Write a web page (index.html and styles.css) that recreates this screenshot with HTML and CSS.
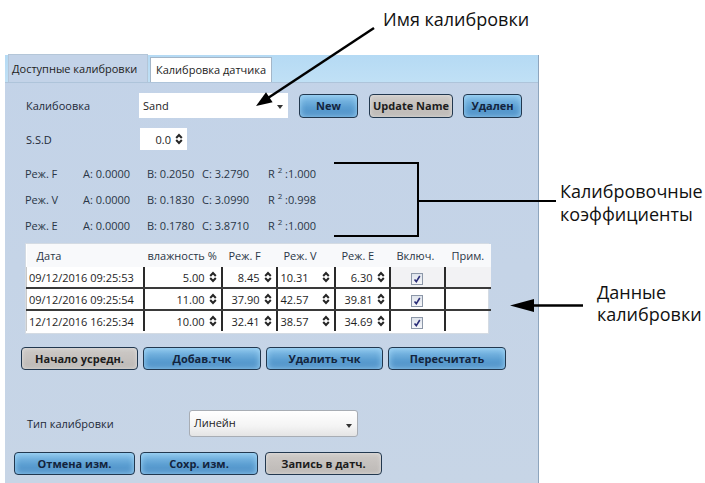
FILE: index.html
```html
<!DOCTYPE html>
<html lang="ru">
<head>
    <meta charset="UTF-8">
    <meta name="viewport" content="width=device-width, initial-scale=1.0">
    <title>Калибровки</title>
    <link rel="stylesheet" href="styles.css">
</head>
<body>
    <div class="page">
        <div class="window">
            <div class="tabstrip">
                <div class="tab active">Доступные калибровки</div>
                <div class="tab">Калибровка датчика</div>
            </div>

            <div class="row row-name">
                <span class="label">Калибоовка</span>
                <div class="combo combo-name"><span>Sand</span><span class="caret"></span></div>
                <button class="btn blue btn-new">New</button>
                <button class="btn gray btn-update">Update Name</button>
                <button class="btn blue btn-del">Удален</button>
            </div>

            <div class="row row-ssd">
                <span class="label">S.S.D</span>
                <div class="spin">
                    <span>0.0</span>
                    <svg class="arrows" width="8" height="12" viewBox="0 0 8 12"><path d="M1.2 5 L4 2 L6.8 5 M1.2 7 L4 10 L6.8 7"/></svg>
                </div>
            </div>

            <div class="coefs">
                <div class="coef"><span>Реж. F</span><span>A: 0.0000</span><span>B: 0.2050</span><span>C: 3.2790</span><span>R <sup>2</sup> :1.000</span></div>
                <div class="coef"><span>Реж. V</span><span>A: 0.0000</span><span>B: 0.1830</span><span>C: 3.0990</span><span>R <sup>2</sup> :0.998</span></div>
                <div class="coef"><span>Реж. E</span><span>A: 0.0000</span><span>B: 0.1780</span><span>C: 3.8710</span><span>R <sup>2</sup> :1.000</span></div>
            </div>

            <div class="grid-wrap">
                <table class="grid">
                    <colgroup>
                        <col style="width:117px"><col style="width:78px"><col style="width:55px">
                        <col style="width:58px"><col style="width:55px"><col style="width:55px"><col style="width:46px">
                    </colgroup>
                    <thead>
                        <tr>
                            <th class="first">Дата</th>
                            <th class="hum">влажность %</th>
                            <th>Реж. F</th>
                            <th>Реж. V</th>
                            <th>Реж. E</th>
                            <th>Включ.</th>
                            <th>Прим.</th>
                        </tr>
                    </thead>
                    <tbody id="rows">
                        <!-- rows are built by the script below -->
                    </tbody>
                </table>
            </div>

            <div class="row btn-row">
                <button class="btn gray w117">Начало усредн.</button>
                <button class="btn blue w118">Добав.тчк</button>
                <button class="btn blue w117">Удалить тчк</button>
                <button class="btn blue w118">Пересчитать</button>
            </div>

            <div class="row row-type">
                <span class="label">Тип калибровки</span>
                <div class="combo combo-type"><span>Линейн</span><span class="caret"></span></div>
            </div>

            <div class="row bottom-row">
                <button class="btn blue w121">Отмена изм.</button>
                <button class="btn blue w118">Сохр. изм.</button>
                <button class="btn gray w117 push">Запись в датч.</button>
            </div>
        </div>

        <svg class="callouts" width="705" height="483" viewBox="0 0 705 483">
            <line x1="374" y1="28" x2="268" y2="98"/>
            <polygon points="256,106 272.6,102.2 266,92.2"/>
            <polyline class="thin" points="334,163 418,163 418,236 334,236"/>
            <line class="thin" x1="418" y1="201" x2="556" y2="201"/>
            <line x1="583" y1="305.5" x2="530" y2="305.5"/>
            <polygon points="510,305.5 534,299 534,312"/>
        </svg>
        <div class="note note-name">Имя калибровки</div>
        <div class="note note-coef">Калибровочные<br>коэффициенты</div>
        <div class="note note-data">Данные<br>калибровки</div>
    </div>

    <script>
        document.addEventListener('DOMContentLoaded', function() {
            const points = [
                { date: '09/12/2016 09:25:53', hum: '5.00', f: '8.45', v: '10.31', e: '6.30', sel: true },
                { date: '09/12/2016 09:25:54', hum: '11.00', f: '37.90', v: '42.57', e: '39.81' },
                { date: '12/12/2016 16:25:34', hum: '10.00', f: '32.41', v: '38.57', e: '34.69' }
            ];

            const arrows = '<svg class="arrows" width="8" height="12" viewBox="0 0 8 12"><path d="M1.2 5 L4 2 L6.8 5 M1.2 7 L4 10 L6.8 7"/></svg>';
            const tick = '<span class="check"><svg width="10" height="10" viewBox="0 0 10 10"><path d="M2.5 5.5 L4.3 7.6 L7.8 2"/></svg></span>';

            function num(value, left) {
                return `<td class="num"><div class="cell${left ? ' left' : ''}"><span>${value}</span>${arrows}</div></td>`;
            }

            const body = document.getElementById('rows');
            points.forEach(function(p) {
                const tr = document.createElement('tr');
                if (p.sel) tr.classList.add('sel');
                tr.innerHTML = `<td class="date">${p.date}</td>` +
                    num(p.hum) + num(p.f) + num(p.v, true) + num(p.e) +
                    `<td class="chk">${tick}</td><td class="note-cell"></td>`;
                body.appendChild(tr);
            });
        });
    </script>
</body>
</html>
```

FILE: styles.css
```css
body {
    margin: 0;
    font-family: "Open Sans", "Noto Sans", sans-serif;
    font-size: 11px;
    color: #1e2a38;
    background: #fff;
}

.page {
    position: relative;
    width: 705px;
    height: 483px;
    overflow: hidden;
}

.window {
    margin-left: 5px;
    margin-top: 55px;
    width: 533px;
    height: 428px;
    background: linear-gradient(#c3d3e8, #c7d5e6);
    border-right: 1px solid #8ea5bd;
}

/* tabs */
.tabstrip {
    height: 28px;
    display: flex;
    align-items: flex-end;
    gap: 2px;
    padding-left: 3px;
    background: linear-gradient(#b5daf4, #c0e0f5);
    border-bottom: 1px solid #aec4da;
    box-sizing: border-box;
}

.tab {
    box-sizing: border-box;
    height: 25px;
    line-height: 24px;
    padding: 0 5px;
    border: 1px solid #a4b6c8;
    border-bottom: none;
    background: #fff;
    white-space: nowrap;
    color: #222;
}

.tab.active {
    height: 28px;
    line-height: 27px;
    width: 140px;
    padding: 0 3px;
    background: #c3d3e8;
    border-color: #b4c6d8;
}

/* form rows */
.row {
    display: flex;
    align-items: center;
}

.label {
    flex: none;
}

.row-name {
    margin-top: 10px;
    height: 25px;
    padding-left: 21px;
}

.row-name .label {
    width: 113px;
}

.combo {
    box-sizing: border-box;
    display: flex;
    align-items: center;
    justify-content: space-between;
    background: #fff;
    padding: 0 5px 0 4px;
    color: #222;
}

.combo-name {
    width: 149px;
    height: 25px;
}

.caret {
    width: 0;
    height: 0;
    border-left: 3px solid transparent;
    border-right: 3px solid transparent;
    border-top: 4px solid #333;
    margin-top: 3px;
}

.btn {
    box-sizing: border-box;
    height: 23px;
    padding: 0;
    font-family: "Open Sans", "Noto Sans", sans-serif;
    font-size: 11px;
    font-weight: bold;
    color: #13243d;
    border: 1px solid #22384f;
    border-radius: 4px;
    cursor: pointer;
    white-space: nowrap;
}

.btn.blue {
    background: linear-gradient(#88c2ea, #5c9fd2 55%, #4a8cc4);
    box-shadow: inset 0 0 6px rgba(170, 220, 250, 0.9);
}

.btn.gray {
    background: linear-gradient(#cdc9c6, #bdb9b6);
    box-shadow: inset 0 0 4px rgba(240, 240, 240, 0.7);
    color: #1c1c1c;
}

.btn-new {
    width: 59px;
    height: 24px;
    margin-left: 11px;
}

.btn-update {
    width: 84px;
    height: 24px;
    margin-left: 11px;
}

.btn-del {
    width: 59px;
    height: 24px;
    margin-left: 10px;
}

.row-ssd {
    margin-top: 10px;
    height: 22px;
    padding-left: 21px;
}

.row-ssd .label {
    width: 114px;
}

.spin {
    box-sizing: border-box;
    width: 47px;
    height: 22px;
    background: #fff;
    display: flex;
    align-items: center;
    justify-content: flex-end;
    gap: 4px;
    padding-right: 4px;
    color: #222;
}

.arrows {
    flex: none;
}

.arrows path {
    fill: none;
    stroke: #262626;
    stroke-width: 2;
}

/* coefficients */
.coefs {
    margin-top: 10px;
    padding-left: 20px;
}

.coef {
    height: 26px;
    display: flex;
    align-items: center;
    color: #2a3646;
}

.coef span:nth-child(1) { width: 58px; }
.coef span:nth-child(2) { width: 64px; }
.coef span:nth-child(3) { width: 55px; }
.coef span:nth-child(4) { width: 66px; }

.coef sup {
    font-size: 8px;
    line-height: 0;
}

/* data grid */
.grid-wrap {
    margin-top: 5px;
    margin-left: 20px;
    width: 464px;
    height: 91px;
    box-sizing: border-box;
    background: #fff;
    border: 1px solid #d4dbe3;
}

.grid {
    border-collapse: collapse;
    table-layout: fixed;
    width: 462px;
}

.grid th {
    height: 23px;
    padding: 0 0 0 7px;
    font-weight: normal;
    text-align: left;
    background: #f8f9fb;
    color: #2a3646;
    white-space: nowrap;
}

.grid th.first {
    padding-left: 10px;
}

.grid th.hum {
    padding-left: 4px;
}

.grid td {
    height: 20px;
    padding: 0;
    border-right: 2px solid #2a2a2a;
    border-bottom: 2px solid #3a3a3a;
    color: #1e1e1e;
    white-space: nowrap;
}

.grid tr:last-child td {
    border-bottom: none;
}

.grid td.date {
    padding-left: 2px;
    border-left: 1px solid #c8c8c8;
}

.grid td.note-cell {
    border-right: none;
}

.cell {
    display: flex;
    align-items: center;
    justify-content: flex-end;
    gap: 4px;
    padding-right: 4px;
}

.cell.left {
    justify-content: space-between;
    padding-left: 3px;
}

.grid tr.sel td.chk,
.grid tr.sel td.note-cell {
    background: #f2f2f4;
}

.chk {
    text-align: center;
}

.check {
    display: inline-block;
    box-sizing: border-box;
    width: 12px;
    height: 12px;
    margin-top: 2px;
    border: 1px solid #8c97a8;
    background: linear-gradient(#dfe4ec, #f6f7fa);
    vertical-align: middle;
}

.check svg {
    display: block;
    margin: 0;
}

.check path {
    fill: none;
    stroke: #2b2e78;
    stroke-width: 1.6;
}

/* buttons */
.btn-row {
    margin-top: 13px;
    padding-left: 16px;
    gap: 5px;
}

.w117 { width: 117px; }
.w118 { width: 118px; }
.w121 { width: 121px; }

.row-type {
    margin-top: 40px;
    height: 27px;
    padding-left: 22px;
}

.row-type .label {
    width: 162px;
}

.combo-type {
    width: 169px;
    height: 27px;
    align-items: flex-start;
    padding-top: 4px;
    border: 1px solid #a8adb4;
    border-radius: 3px;
    background: linear-gradient(#ffffff, #f4f4f4 60%, #e4e4e4);
}

.combo-type .caret {
    margin-top: 9px;
}

.bottom-row {
    margin-top: 15px;
    padding-left: 9px;
    gap: 5px;
}

.bottom-row .push {
    margin-left: 2px;
}

/* annotations */
.callouts {
    position: absolute;
    left: 0;
    top: 0;
    pointer-events: none;
}

.callouts line,
.callouts polyline {
    fill: none;
    stroke: #000;
    stroke-width: 2.5;
}

.callouts .thin {
    stroke-width: 2;
}

.callouts polygon {
    fill: #000;
}

.note {
    position: absolute;
    font-family: "Open Sans", "Noto Sans", sans-serif;
    font-size: 18px;
    line-height: 23px;
    color: #111;
    white-space: nowrap;
}

.note-name {
    left: 383px;
    top: 8px;
}

.note-coef {
    left: 560px;
    top: 180px;
}

.note-data {
    left: 597px;
    top: 281px;
    line-height: 22px;
}
```
